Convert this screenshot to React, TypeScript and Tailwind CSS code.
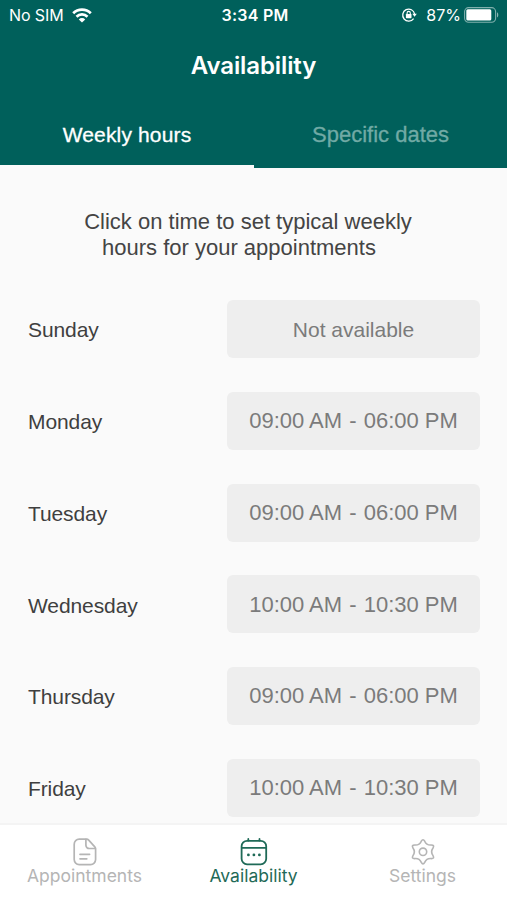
import clsx from "clsx";

type TabKey = "appointments" | "availability" | "settings";

interface DayHours {
  day: string;
  hours: { from: string; to: string } | null;
}

const WEEK: DayHours[] = [
  { day: "Sunday", hours: null },
  { day: "Monday", hours: { from: "09:00 AM", to: "06:00 PM" } },
  { day: "Tuesday", hours: { from: "09:00 AM", to: "06:00 PM" } },
  { day: "Wednesday", hours: { from: "10:00 AM", to: "10:30 PM" } },
  { day: "Thursday", hours: { from: "09:00 AM", to: "06:00 PM" } },
  { day: "Friday", hours: { from: "10:00 AM", to: "10:30 PM" } },
];

const WifiIcon = () => (
  <svg width="20" height="15" viewBox="0 0 20 15" fill="none" stroke="currentColor" strokeWidth="2.7">
    <path d="M1.2 5.2a12.4 12.4 0 0 1 17.6 0" />
    <path d="M4.5 8.7a7.8 7.8 0 0 1 11 0" />
    <path d="M10 14.6 6.8 11.4a4.5 4.5 0 0 1 6.4 0Z" fill="currentColor" stroke="none" />
  </svg>
);

const RotationLockIcon = () => (
  <svg width="16" height="16" viewBox="0 0 16 16" fill="none" stroke="currentColor" strokeWidth="1.3">
    <path d="M12.6 11.6A6 6 0 1 1 13.6 7" />
    <path d="M11.3 6.8h4.5l-2.2 2.9Z" fill="currentColor" stroke="none" />
    <rect x="4.9" y="7" width="5.6" height="4.2" rx="0.6" fill="currentColor" stroke="none" />
    <path d="M6.1 7.2V6a1.6 1.6 0 0 1 3.2 0v1.2" strokeWidth="1.1" />
  </svg>
);

const BatteryIcon = () => (
  <svg width="35" height="16" viewBox="0 0 35 16" fill="none">
    <rect x="0.6" y="0.6" width="31" height="14.6" rx="4" stroke="#fff" strokeOpacity="0.5" strokeWidth="1.1" />
    <rect x="2.3" y="2.3" width="25" height="11.2" rx="1.5" fill="#fff" />
    <path d="M33 5.3c1.7.7 1.7 4.5 0 5.2Z" fill="#fff" fillOpacity="0.55" />
  </svg>
);

const DocumentIcon = () => (
  <svg width="24" height="28" viewBox="0 0 24 28" fill="none" stroke="currentColor" strokeWidth="1.7" strokeLinecap="round" strokeLinejoin="round">
    <path d="M13.6 1.2H6.2a5 5 0 0 0-5 5v15.4a5 5 0 0 0 5 5h11.4a5 5 0 0 0 5-5V10.8a3 3 0 0 0-.8-2L15.7 2.1a3 3 0 0 0-2.1-.9Z" />
    <path d="M12.9 1.4v5.8a3.3 3.3 0 0 0 3.3 3.3h6.1" />
    <path d="M7 16.3h9.6M7 20.8h6.8" />
  </svg>
);

const CalendarIcon = () => (
  <svg width="28" height="28" viewBox="0 0 28 28" fill="none" stroke="currentColor" strokeWidth="1.8" strokeLinecap="round">
    <rect x="1.6" y="2.8" width="24.6" height="23.5" rx="5.5" />
    <path d="M1.8 9.8h24.2M8.3 1v1.6M19.5 1v1.6" />
    <path d="M8.4 16.9h.01M13.9 16.9h.01M19.4 16.9h.01" strokeWidth="2.8" />
  </svg>
);

const GearIcon = () => (
  <svg width="26" height="28" viewBox="-13 -13.8 26 28" fill="none" stroke="currentColor" strokeWidth="1.6" strokeLinejoin="round">
    <path d="M-1.7-10.6Q0-13.6 1.7-10.6Q3.6-6.3 8.3-6.8Q11.8-6.8 10-3.8Q7.3 0 10 3.8Q11.8 6.8 8.3 6.8Q3.6 6.3 1.7 10.6Q0 13.6-1.7 10.6Q-3.6 6.3-8.3 6.8Q-11.8 6.8-10 3.8Q-7.3 0-10-3.8Q-11.8-6.8-8.3-6.8Q-3.6-6.3-1.7-10.6Z" />
    <circle r="3.7" />
  </svg>
);

const NAV: { key: TabKey; label: string; icon: React.ReactNode }[] = [
  { key: "appointments", label: "Appointments", icon: <DocumentIcon /> },
  { key: "availability", label: "Availability", icon: <CalendarIcon /> },
  { key: "settings", label: "Settings", icon: <GearIcon /> },
];

const StatusBar = () => (
  <div className="grid h-[30px] grid-cols-3 items-center pr-2 pl-[9px] font-['Inter',sans-serif] text-base leading-none">
    <div className="flex items-center gap-2">
      <span className="tracking-[-0.1px]">No SIM</span>
      <WifiIcon />
    </div>
    <span className="pl-0.5 text-center font-semibold tracking-[0.25px]">3:34 PM</span>
    <div className="flex items-center justify-end">
      <RotationLockIcon />
      <span className="mr-[3px] ml-[9px]">87%</span>
      <BatteryIcon />
    </div>
  </div>
);

const Header = () => (
  <header className="h-[168px] shrink-0 bg-[#00605b] text-white">
    <StatusBar />
    <h1 className="flex h-[72px] items-center justify-center font-['Inter',sans-serif] text-2xl font-semibold tracking-[-0.1px]">
      Availability
    </h1>
    <div className="flex h-[66px] leading-none">
      <button className="w-[254px] border-b-[3px] border-[#fafafa] pt-px text-[21px] tracking-[0.15px] [-webkit-text-stroke:0.3px]">
        Weekly hours
      </button>
      <button className="flex-1 border-b-[3px] border-transparent pt-0.5 text-[22px] text-[#71aaa5] [-webkit-text-stroke:0.3px]">
        Specific dates
      </button>
    </div>
  </header>
);

const DayRow = ({ day, hours }: DayHours) => (
  <li className="flex h-[58px] items-center justify-between">
    <span className="pt-0.5 text-[21px] tracking-[-0.1px] text-[#3f3f3f]">{day}</span>
    <button
      className={clsx(
        "h-full w-[253px] rounded-md bg-[#eeeeee] text-[#7b7b7b]",
        hours ? "text-[22px]" : "pt-0.5 text-[21px]",
      )}
    >
      {hours ? (
        <>
          {hours.from}
          <span className="mx-px"> - </span>
          {hours.to}
        </>
      ) : (
        "Not available"
      )}
    </button>
  </li>
);

const BottomNav = ({ active }: { active: TabKey }) => (
  <nav className="grid h-[77px] shrink-0 grid-cols-3 border-t-2 border-[#f4f4f4] bg-white font-['Inter',sans-serif]">
    {NAV.map(({ key, label, icon }) => (
      <button
        key={key}
        className={clsx(
          "flex flex-col items-center pt-[13px] text-[17.5px] leading-5",
          key === active ? "text-[#1f6a57]" : "text-[#b5b5b5]",
        )}
      >
        {icon}
        {label}
      </button>
    ))}
  </nav>
);

export default function App() {
  return (
    <div className="flex h-screen flex-col overflow-hidden bg-[#fafafa] font-['Liberation_Sans',Arial,sans-serif]">
      <Header />
      <main className="min-h-0 flex-1 overflow-hidden">
        <p className="pt-[41px] pr-[11px] text-center text-[22px] leading-[26px] text-[#444444]">
          Click on time to set typical weekly
          <span className="block pr-[18px]">hours for your appointments</span>
        </p>
        <ul className="flex flex-col gap-[33.7px] pt-[39.2px] pr-[27px] pl-7">
          {WEEK.map((row) => (
            <DayRow key={row.day} {...row} />
          ))}
        </ul>
      </main>
      <BottomNav active="availability" />
    </div>
  );
}
